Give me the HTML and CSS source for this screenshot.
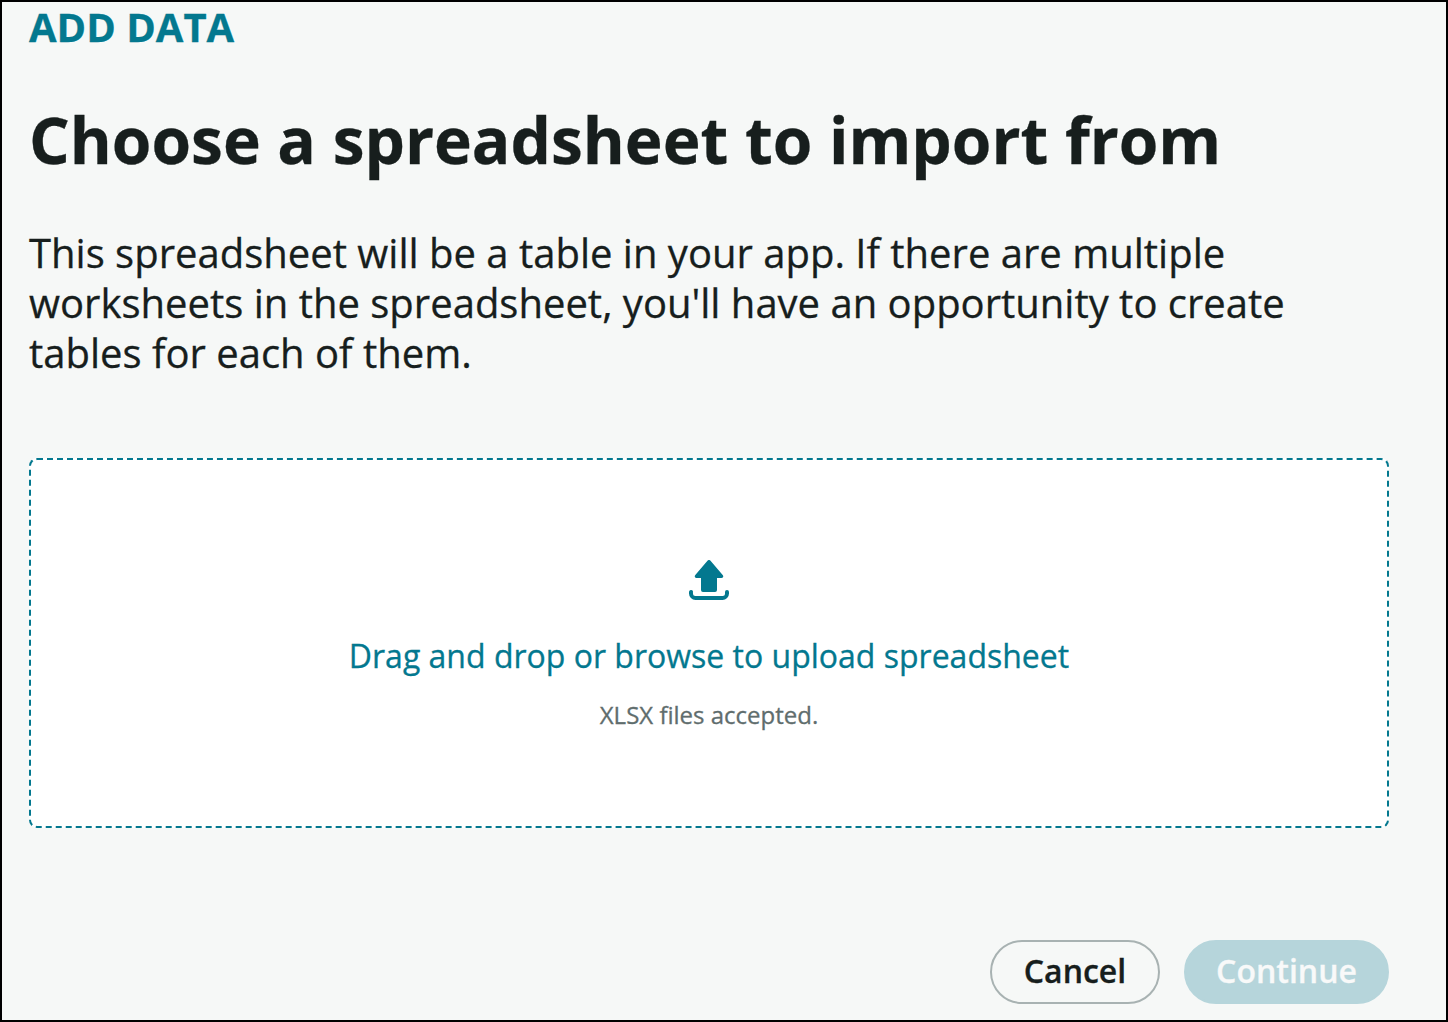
FILE: index.html
```html
<!DOCTYPE html>
<html lang="en">
<head>
<meta charset="utf-8">
<title>Add data</title>
<link rel="stylesheet" href="styles.css">
</head>
<body>
<main class="dialog">
  <p class="eyebrow">ADD DATA</p>
  <h1 class="title">Choose a spreadsheet to import from</h1>
  <p class="description">This spreadsheet will be a table in your app. If there are multiple worksheets in the spreadsheet, you'll have an opportunity to create tables for each of them.</p>
  <section class="dropzone">
    <svg class="upload-icon" viewBox="0 0 40 40" aria-hidden="true">
      <path d="M18.700.6a1.800 1.800 0 0 1 2.600 0l12.400 14.300c1.100 1.300.5 3.100-1.200 3.100H28v12a2 2 0 0 1-2 2H14a2 2 0 0 1-2-2V18H7.500c-1.700 0-2.300-1.800-1.200-3.100z" fill="currentColor"/>
      <path d="M2 32a4.500 4.500 0 0 0 0 1.500A4.500 4.500 0 0 0 6.500 38h27a4.500 4.500 0 0 0 4.500-4.500V32" fill="none" stroke="currentColor" stroke-width="4" stroke-linecap="round"/>
    </svg>
    <p class="prompt">Drag and drop or browse to upload spreadsheet</p>
    <p class="hint">XLSX files accepted.</p>
  </section>
  <footer class="actions">
    <button class="button cancel">Cancel</button>
    <button class="button continue" disabled>Continue</button>
  </footer>
</main>
</body>
</html>
```
FILE: styles.css
```css
* { box-sizing: border-box; }
body { margin: 0; font-family: "Open Sans", "Noto Sans", sans-serif; }
p, h1 { margin: 0; }
.dialog {
  display: flex;
  flex-direction: column;
  width: 1448px;
  height: 1022px;
  padding: 0 57px 0 27px;
  border: 2px solid #000;
  background: #f6f8f7;
  color: #171e1d;
  overflow: hidden;
  -webkit-text-stroke: 0.3px;
}
.eyebrow { color: #03788f; font-size: 40px; font-weight: 700; line-height: 50px; }
.title { margin-top: 48px; font-size: 64px; font-weight: 700; line-height: 80px; white-space: nowrap; }
.description { margin-top: 48px; font-size: 40px; line-height: 50px; }
.dropzone {
  display: flex;
  flex-direction: column;
  align-items: center;
  height: 370px;
  margin-top: 80px;
  padding-top: 100px;
  border: 2px dashed #03788f;
  border-radius: 8px;
  background: #fff;
}
.upload-icon { width: 40px; height: 40px; color: #03788f; }
.prompt { margin-top: 36px; color: #03788f; font-size: 32px; line-height: 40px; white-space: nowrap; }
.hint { margin-top: 24px; color: #5f6d6d; font-size: 24px; line-height: 30px; }
.actions { display: flex; justify-content: flex-end; gap: 24px; margin-top: 112px; }
.button {
  height: 64px;
  padding: 0 0 2px;
  border: 2px solid #a8b2b2;
  border-radius: 32px;
  font: 600 32px/40px "Open Sans", "Noto Sans", sans-serif;
  -webkit-text-stroke: 0.3px;
}
.cancel { width: 170px; background: transparent; color: #171e1d; }
.continue { width: 205px; border-color: #b6d5db; background: #b6d5db; color: #f8f9f9; }
```
